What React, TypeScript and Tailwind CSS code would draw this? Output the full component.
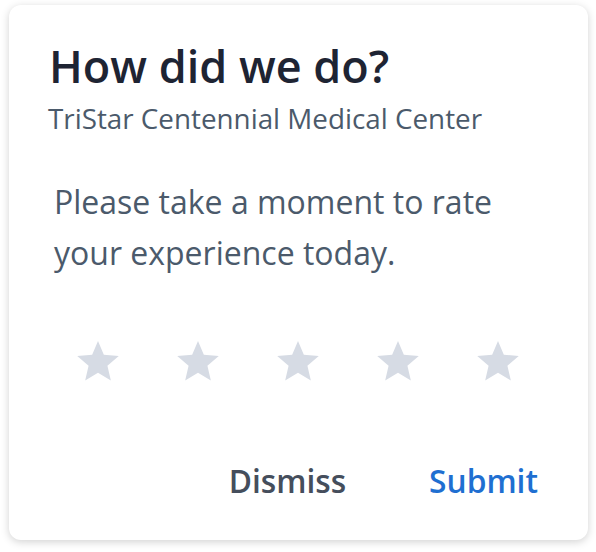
import React from 'react';

function Star() {
  return (
    <svg width="42" height="40" viewBox="2 2 20 19.27" className="fill-[#d6dbe4]">
      <path d="M12 17.27L18.18 21l-1.64-7.03L22 9.24l-7.19-.61L12 2 9.19 8.63 2 9.24l5.46 4.73L5.82 21z" />
    </svg>
  );
}

export default function App() {
  return (
    <div className="w-[596px] h-[552px] bg-white pt-[5px] pl-[9px]" style={{ fontFamily: '"Open Sans", sans-serif' }}>
      <div className="w-[579px] h-[535px] rounded-[12px] bg-white shadow-[0_2px_8px_rgba(0,0,0,0.18)] flex flex-col px-[40px] pt-[34px]">
        <h1 className="text-[45px] leading-[54px] font-semibold text-[#1e2433]">How did we do?</h1>
        <p className="mt-[7px] -ml-[1px] text-[27.8px] leading-[36px] text-[#4b5a6b]">TriStar Centennial Medical Center</p>
        <p className="mt-[40px] pl-[5px] text-[32px] leading-[51px] text-[#4b5a6b] w-[470px]">
          Please take a moment to rate your experience today.
        </p>
        <div className="mt-[63px] flex gap-[58px] pl-[28px]">
          {[0, 1, 2, 3, 4].map((i) => (
            <Star key={i} />
          ))}
        </div>
        <div className="mt-[78px] flex justify-end gap-[83px] pr-[10px]">
          <button className="text-[31.7px] leading-[44px] font-semibold text-[#454e5c]">Dismiss</button>
          <button className="text-[31.7px] leading-[44px] font-semibold text-[#1f6fd1]">Submit</button>
        </div>
      </div>
    </div>
  );
}
